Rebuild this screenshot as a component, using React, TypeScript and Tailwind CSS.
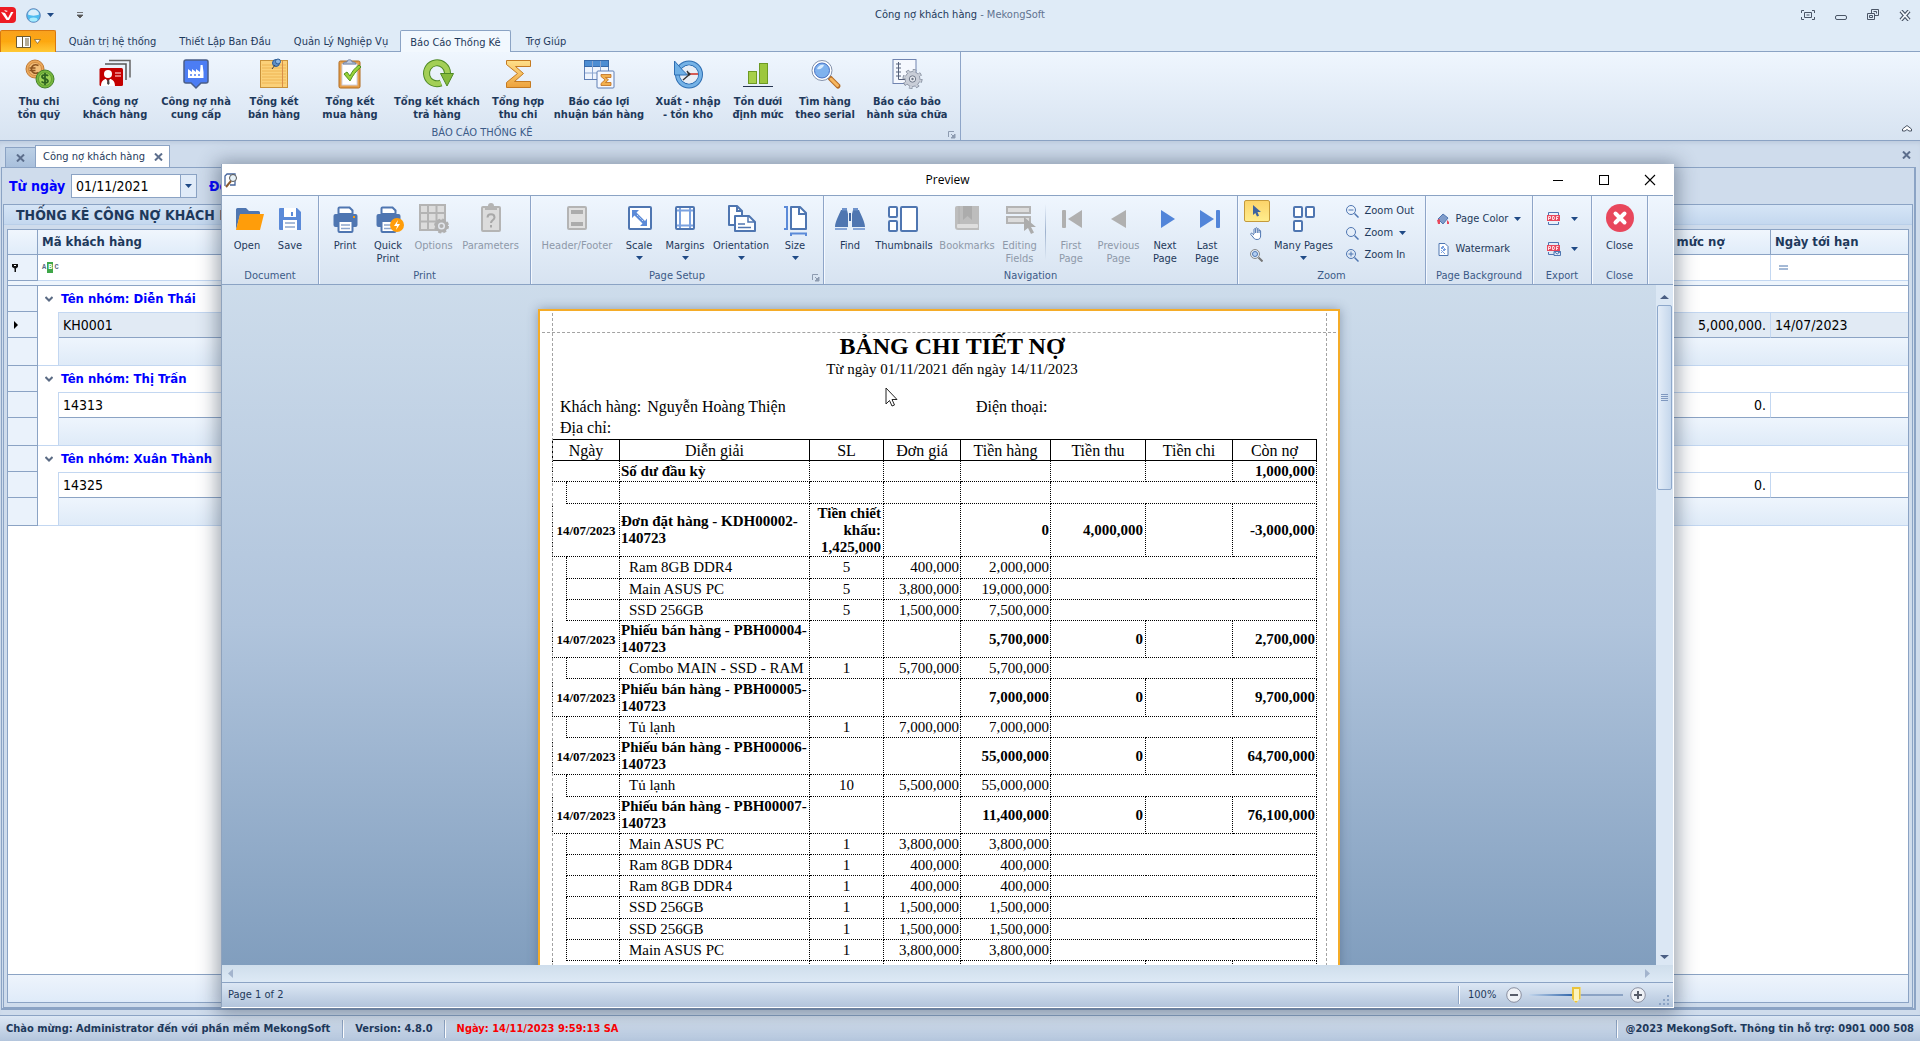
import React, { useState } from 'react';
import clsx from 'clsx';

const menuTabs = [
  { label: 'Quản trị hệ thống', width: 'w-[111px]' },
  { label: 'Thiết Lập Ban Đầu', width: 'w-[114px]' },
  { label: 'Quản Lý Nghiệp Vụ', width: 'w-[118px]' },
  { label: 'Báo Cáo Thống Kê', width: 'w-[111px]' },
  { label: 'Trợ Giúp', width: 'w-[70px]' },
];

const groups = [
  { name: 'Diễn Thái', code: 'KH0001', limit: '5,000,000.', due: '14/07/2023', focused: true },
  { name: 'Thị Trấn', code: '14313', limit: '0.', due: '', focused: false },
  { name: 'Xuân Thành', code: '14325', limit: '0.', due: '', focused: false },
];

type ReportRow = {
  date?: string;
  text: string;
  sl?: string;
  price?: string;
  amount?: string;
  paid?: string;
  debt?: string;
  bold?: boolean;
  height: string;
};

const reportRows: ReportRow[] = [
  { bold: true, text: 'Số dư đầu kỳ', debt: '1,000,000', height: 'h-[21px]' },
  { text: '', height: 'h-[22px]' },
  {
    bold: true,
    date: '14/07/2023',
    text: 'Đơn đặt hàng - KDH00002-140723',
    sl: 'Tiền chiết khấu: 1,425,000',
    amount: '0',
    paid: '4,000,000',
    debt: '-3,000,000',
    height: 'h-[53px]',
  },
  { text: 'Ram 8GB DDR4', sl: '5', price: '400,000', amount: '2,000,000', height: 'h-[22px]' },
  { text: 'Main ASUS PC', sl: '5', price: '3,800,000', amount: '19,000,000', height: 'h-[21px]' },
  { text: 'SSD 256GB', sl: '5', price: '1,500,000', amount: '7,500,000', height: 'h-[21px]' },
  { bold: true, date: '14/07/2023', text: 'Phiếu bán hàng - PBH00004-140723', amount: '5,700,000', paid: '0', debt: '2,700,000', height: 'h-[37px]' },
  { text: 'Combo MAIN - SSD - RAM', sl: '1', price: '5,700,000', amount: '5,700,000', height: 'h-[21px]' },
  { bold: true, date: '14/07/2023', text: 'Phiếu bán hàng - PBH00005-140723', amount: '7,000,000', paid: '0', debt: '9,700,000', height: 'h-[38px]' },
  { text: 'Tủ lạnh', sl: '1', price: '7,000,000', amount: '7,000,000', height: 'h-[21px]' },
  { bold: true, date: '14/07/2023', text: 'Phiếu bán hàng - PBH00006-140723', amount: '55,000,000', paid: '0', debt: '64,700,000', height: 'h-[37px]' },
  { text: 'Tủ lạnh', sl: '10', price: '5,500,000', amount: '55,000,000', height: 'h-[22px]' },
  { bold: true, date: '14/07/2023', text: 'Phiếu bán hàng - PBH00007-140723', amount: '11,400,000', paid: '0', debt: '76,100,000', height: 'h-[37px]' },
  { text: 'Main ASUS PC', sl: '1', price: '3,800,000', amount: '3,800,000', height: 'h-[21px]' },
  { text: 'Ram 8GB DDR4', sl: '1', price: '400,000', amount: '400,000', height: 'h-[21px]' },
  { text: 'Ram 8GB DDR4', sl: '1', price: '400,000', amount: '400,000', height: 'h-[21px]' },
  { text: 'SSD 256GB', sl: '1', price: '1,500,000', amount: '1,500,000', height: 'h-[22px]' },
  { text: 'SSD 256GB', sl: '1', price: '1,500,000', amount: '1,500,000', height: 'h-[21px]' },
  { text: 'Main ASUS PC', sl: '1', price: '3,800,000', amount: '3,800,000', height: 'h-[21px]' },
  { bold: true, text: '', height: 'h-[37px]' },
];

function Icon({ children, size = 32 }: { children: React.ReactNode; size?: number }) {
  return (
    <svg width={size} height={size} viewBox={`0 0 ${size} ${size}`} fill="none" className="shrink-0 overflow-visible" aria-hidden="true">
      {children}
    </svg>
  );
}

function Caret({ className }: { className?: string }) {
  return (
    <svg width="7" height="4" viewBox="0 0 7 4" className={clsx('shrink-0', className)} aria-hidden="true">
      <path d="M0 0h7L3.5 4z" fill="#1f4a86" />
    </svg>
  );
}

function CloseGlyph() {
  return (
    <svg width="9" height="8" viewBox="0 0 9 8" aria-hidden="true">
      <path d="M1 .5l7 7M8 .5l-7 7" stroke="#5c6e8c" strokeWidth="2" />
    </svg>
  );
}

function Launcher() {
  return (
    <svg width="8" height="8" viewBox="0 0 8 8" fill="none" aria-hidden="true">
      <path d="M.5 6V.5H6" stroke="#8d9bb0" />
      <path d="M3 3l3 3M7 3v4H3z" stroke="#8d9bb0" fill="#8d9bb0" />
    </svg>
  );
}

const Divider = () => <div className="h-[18px] w-[2px] border-l border-[#8ea5c4] bg-white" />;

/* ---------- Main ribbon icons ---------- */

const icons = {
  coins: (
    <Icon>
      <circle cx="12" cy="12" r="9" fill="#eba85a" stroke="#c07a35" />
      <circle cx="12" cy="12" r="6.5" fill="#f3bf7b" stroke="#d18b42" />
      <path d="M15.500 8.500c-4-2-7 0-7 3.500s3 5.500 7 3.500M6.500 11h6M6.500 13.500h6" stroke="#8d5420" strokeWidth="1.6" />
      <circle cx="22" cy="22" r="9" fill="#76b63c" stroke="#43812a" />
      <circle cx="22" cy="22" r="6.500" fill="#9cd257" stroke="#5f9f35" />
      <path d="M25 19c-1-1.500-6-1.500-6 .7 0 2.500 6 1.800 6 4.400 0 2.300-5 2.300-6.500.4M22 16v12" stroke="#2e6420" strokeWidth="1.8" />
    </Icon>
  ),
  idCards: (
    <Icon>
      <path d="M10 3.500h21v17" stroke="#666" strokeWidth="1.500" />
      <path d="M6 7h21v16" stroke="#555" strokeWidth="1.500" />
      <rect x="0.500" y="11" width="23.500" height="18" rx="1.500" fill="#c40000" />
      <circle cx="9" cy="17" r="4" fill="#fff" />
      <path d="M2 29c0-5 3-7 5-7l2 3 2-3c2 0 5 2 5 7z" fill="#fff" />
      <path d="M8.500 22.500h1.500l.6 4-1.300 1.500L8 26.500z" fill="#444" />
      <path d="M16 16h6M16 19h6" stroke="#f29a9a" strokeWidth="1.300" />
    </Icon>
  ),
  factoryPin: (
    <Icon>
      <path d="M6 3h20a2 2 0 0 1 2 2v19a2 2 0 0 1-2 2h-5l-5 5-5-5H6a2 2 0 0 1-2-2V5a2 2 0 0 1 2-2z" fill="#4c7df4" stroke="#4a5e88" strokeWidth="1.500" />
      <path d="M8 21v-9l4 3v-3l4 3v-3l4 3 .6-7h2l.9 7V21z" fill="#fff" />
      <path d="M10 18h2M14 18h2M18 18h2" stroke="#4c7df4" strokeWidth="1.500" />
    </Icon>
  ),
  pinnedNote: (
    <Icon>
      <rect x="2.500" y="3.500" width="27" height="27" fill="#fbd179" stroke="#c8923a" />
      <path d="M4 8h24M4 11h24M4 14h24M4 17h24M4 20h24M4 23h24M4 26h24" stroke="#eeb554" />
      <path d="M24.500 4v26" stroke="#d98f4a" />
      <circle cx="18" cy="6" r="3.500" fill="#5f90c6" stroke="#2d5c94" />
      <circle cx="20" cy="4.500" r="2.500" fill="#8db7e2" stroke="#2d5c94" />
      <path d="M17 8l-3 4" stroke="#444" />
    </Icon>
  ),
  clipboardCheck: (
    <Icon>
      <rect x="5" y="4" width="21" height="27" rx="1.500" fill="#e6a04c" stroke="#b06a1f" />
      <rect x="8" y="7" width="15" height="21" fill="#fff" stroke="#d3d3e2" />
      <path d="M9 7c0-2 3-2 4-2 0-3 5-3 5 0 1 0 4 0 4 2z" fill="#bcc7dc" stroke="#6f80a3" />
      <path d="M10 17l3-2 3 4c2-5 5-8 9-11l2 2c-5 4-8 8-11 14z" fill="#9ad23a" stroke="#4e9320" />
    </Icon>
  ),
  refresh: (
    <Icon>
      <path d="M20 26A10.500 10.500 0 1 1 26.500 16" stroke="#4f8a26" strokeWidth="7" />
      <path d="M20 26A10.500 10.500 0 1 1 26.500 16" stroke="#a3cf56" strokeWidth="5" />
      <path d="M19.500 16.500h13L26 29z" fill="#85ba3d" stroke="#4f8a26" />
    </Icon>
  ),
  sigma: (
    <Icon>
      <path d="M4.500 3.500h24v6h-15l8 7-9 8h16v6h-24v-5l11-9-11-9z" fill="url(#gold)" stroke="#c47a22" />
      <defs>
        <linearGradient id="gold" x1="0" y1="0" x2="0" y2="1">
          <stop stopColor="#ffe08a" />
          <stop offset="1" stopColor="#eda23c" />
        </linearGradient>
      </defs>
    </Icon>
  ),
  tableSum: (
    <Icon>
      <rect x="1.500" y="3.500" width="24" height="19" fill="#eef4fd" stroke="#5f7fb5" />
      <rect x="1.500" y="3.500" width="24" height="6" fill="#4c8dd3" stroke="#3669aa" />
      <path d="M9.500 4v18M17.500 4v18M2 16h23" stroke="#8ba6d0" />
      <rect x="14" y="14" width="17" height="17" rx="1" fill="#f4f8ff" stroke="#5f7fb5" />
      <path d="M18 17.500h10v3h-5.500l3 2.300-3 2.700H28v3H18v-2l4-3.700-4-3.300z" fill="#f3b04d" stroke="#bd6d1e" strokeWidth=".8" />
    </Icon>
  ),
  history: (
    <Icon>
      <circle cx="17" cy="17.500" r="11.500" stroke="#2f6fb3" strokeWidth="5" />
      <circle cx="17" cy="17.500" r="11.500" stroke="#75b2e6" strokeWidth="3" />
      <circle cx="17" cy="17.500" r="9" fill="#e8eef6" />
      <path d="M2.500 4v14h13l-5-5z" fill="#6fb0e6" stroke="#2f6fb3" />
      <path d="M17 17h9" stroke="#d02b20" strokeWidth="1.500" />
      <path d="M18 17l-7 6M17 17l-2-3" stroke="#333" strokeWidth="1.400" />
      <circle cx="17" cy="17" r="1.500" fill="#333" />
    </Icon>
  ),
  bars: (
    <Icon>
      <rect x="6.500" y="14.500" width="8" height="12" fill="#a7d04a" stroke="#6d9a24" />
      <rect x="17.500" y="6.500" width="8" height="20" fill="#9cc73d" stroke="#6d9a24" />
      <path d="M1 29.500h30" stroke="#26344f" />
    </Icon>
  ),
  magnifier: (
    <Icon>
      <path d="M21 21l8 8" stroke="#b36a24" strokeWidth="5" strokeLinecap="round" />
      <path d="M22 22l6.500 6.500" stroke="#f7b75f" strokeWidth="3" strokeLinecap="round" />
      <circle cx="13" cy="13.500" r="10" fill="#fff" stroke="#8391ab" />
      <circle cx="13" cy="13.500" r="7.500" fill="#7fb2ee" stroke="#4670c4" />
      <path d="M8 12c1-3 4-5 7-4-1 3-4 5-7 4z" fill="#d8ebff" />
    </Icon>
  ),
  notebookGear: (
    <Icon>
      <rect x="2" y="2.500" width="23" height="24" fill="#f5f8fe" stroke="#7084b0" />
      <path d="M7.500 5v17.500h7M5 7h5M5 11h5M5 15h5M5 19h5" stroke="#55607a" />
      <circle cx="21.500" cy="22" r="8.500" stroke="#7d8798" strokeWidth="3" strokeDasharray="3.300 3.380" />
      <circle cx="21.500" cy="22" r="7.500" fill="#c9ced8" stroke="#7d8798" strokeWidth=".8" />
      <circle cx="21.500" cy="22" r="8" stroke="#c9ced8" strokeWidth="2.500" strokeDasharray="2.300 3.980" strokeDashoffset="-.5" />
      <circle cx="21.500" cy="22" r="3.200" fill="#e8ebf1" stroke="#6f7888" />
      <circle cx="21.500" cy="22" r="1.200" fill="#6f7888" />
    </Icon>
  ),
};

const reportTools = [
  { lines: ['Thu chi', 'tồn quỹ'], icon: icons.coins, width: 'w-[62px]' },
  { lines: ['Công nợ', 'khách hàng'], icon: icons.idCards, width: 'w-[90px]' },
  { lines: ['Công nợ nhà', 'cung cấp'], icon: icons.factoryPin, width: 'w-[72px]' },
  { lines: ['Tổng kết', 'bán hàng'], icon: icons.pinnedNote, width: 'w-[84px]' },
  { lines: ['Tổng kết', 'mua hàng'], icon: icons.clipboardCheck, width: 'w-[68px]' },
  { lines: ['Tổng kết khách', 'trả hàng'], icon: icons.refresh, width: 'w-[106px]' },
  { lines: ['Tổng hợp', 'thu chi'], icon: icons.sigma, width: 'w-[56px]' },
  { lines: ['Báo cáo lợi', 'nhuận bán hàng'], icon: icons.tableSum, width: 'w-[106px]' },
  { lines: ['Xuất - nhập', '- tồn kho'], icon: icons.history, width: 'w-[72px]' },
  { lines: ['Tồn dưới', 'định mức'], icon: icons.bars, width: 'w-[68px]' },
  { lines: ['Tìm hàng', 'theo serial'], icon: icons.magnifier, width: 'w-[66px]' },
  { lines: ['Báo cáo bảo', 'hành sửa chữa'], icon: icons.notebookGear, width: 'w-[98px]' },
];

/* ---------- Preview ribbon icons ---------- */

const printerShape = (
  <>
    <rect x="4.500" y="12" width="24" height="13" rx="2" fill="#4f76b1" />
    <path d="M9.500 12V6.500a1 1 0 0 1 1-1h10l3 3V12z" fill="#fff" stroke="#4f76b1" strokeWidth="2" />
    <rect x="9.500" y="19" width="14" height="11" rx="1" fill="#fff" stroke="#4f76b1" strokeWidth="2" />
    <path d="M12 23h9M12 26.500h9" stroke="#8da6cd" strokeWidth="1.500" />
  </>
);

const previewIcons = {
  open: (
    <Icon>
      <path d="M5 28V7.500A1.500 1.500 0 0 1 6.500 6H15l3 3h9.500A1.500 1.500 0 0 1 29 10.500V13H9z" fill="#4f76b1" />
      <path d="M9 12h24l-4 16H5z" fill="#ff9d0a" />
    </Icon>
  ),
  save: (
    <Icon>
      <path d="M6 6h17l4 4v18H6a1 1 0 0 1-1-1V7a1 1 0 0 1 1-1z" fill="#5b8ad8" />
      <rect x="10" y="6" width="12" height="9" fill="#fff" />
      <rect x="17" y="10" width="2" height="4" fill="#5b8ad8" />
      <rect x="9" y="18" width="14" height="10" fill="#fff" />
      <path d="M11 21h10M11 25h10" stroke="#8da6cd" strokeWidth="1.500" />
    </Icon>
  ),
  print: (
    <Icon>
      {printerShape}
      <rect x="24" y="14" width="2" height="2" fill="#ff9d0a" />
    </Icon>
  ),
  quickPrint: (
    <Icon>
      {printerShape}
      <circle cx="25" cy="23" r="7" fill="#ff9d0a" />
      <path d="M26 18l-4 6h3l-1 4 4-6h-3z" fill="#fff" />
    </Icon>
  ),
  options: (
    <Icon>
      <rect x="2" y="3" width="25" height="25" fill="#dcdcdc" stroke="#b4b4b4" strokeWidth="2" />
      <path d="M10 3v25M18.500 3v25M2 11h25M2 19.500h25" stroke="#b4b4b4" strokeWidth="2" />
      <circle cx="23.500" cy="24" r="6.500" fill="#b0b0b0" stroke="#b0b0b0" strokeWidth="2" strokeDasharray="3 2.100" />
      <circle cx="23.500" cy="24" r="2.800" fill="#b0b0b0" stroke="#e2e6ec" strokeWidth="1.500" />
    </Icon>
  ),
  parameters: (
    <Icon>
      <rect x="7" y="5" width="18" height="24" rx="1" fill="#dcdcdc" stroke="#b4b4b4" strokeWidth="2" />
      <path d="M10 4h3a3 3 0 0 1 6 0h3v4H10z" fill="#b4b4b4" />
      <path d="M12.500 15.500c0-4.500 7-4.500 7 0 0 2.500-3.500 2.500-3.500 5.500M16 23v2.500" stroke="#a8a8a8" strokeWidth="2" />
    </Icon>
  ),
  headerFooter: (
    <Icon>
      <rect x="7" y="5" width="18" height="22" rx="1" fill="#e0e0e0" stroke="#b4b4b4" strokeWidth="2" />
      <rect x="10" y="8" width="12" height="4" fill="#acacac" />
      <rect x="10" y="20" width="12" height="4" fill="#acacac" />
    </Icon>
  ),
  scale: (
    <Icon>
      <rect x="6" y="5" width="22" height="22" rx="1" fill="#fff" stroke="#4f76b1" strokeWidth="2" />
      <path d="M9 8h7l-2.500 2.500L22 19l2-2.500V24h-7l2.500-2.500-8-8L9 16z" fill="#5b8ad8" />
      <path d="M14 13l6 6" stroke="#fff" strokeDasharray="1 1.500" />
    </Icon>
  ),
  margins: (
    <Icon>
      <rect x="7" y="5" width="18" height="22" rx="1" fill="#fff" />
      <path d="M11 5v22M21 5v22M7 8.500h18M7 23.500h18" stroke="#7ba2e0" strokeWidth="2" />
      <rect x="7" y="5" width="18" height="22" rx="1" stroke="#4f76b1" strokeWidth="2" />
    </Icon>
  ),
  orientation: (
    <Icon>
      <path d="M4 4h8l5 5v14H4z" fill="#fff" stroke="#4f76b1" strokeWidth="2" strokeLinejoin="round" />
      <path d="M12 4v5h5" stroke="#4f76b1" strokeWidth="2" />
      <path d="M10 14h14l6 6v9H10z" fill="#fff" stroke="#4f76b1" strokeWidth="2" strokeLinejoin="round" />
      <path d="M23 14v6h7M13 22h7M13 25.500h13" stroke="#4f76b1" strokeWidth="1.500" />
    </Icon>
  ),
  size: (
    <Icon>
      <path d="M12 5h9l6 6v16H12z" fill="#fff" stroke="#4f76b1" strokeWidth="2" strokeLinejoin="round" />
      <path d="M20 5v7h7" stroke="#4f76b1" strokeWidth="2" />
      <path d="M5 5h3v22H5M12 34v-2.500h15V34" stroke="#5b8ad8" strokeWidth="2" />
    </Icon>
  ),
  find: (
    <Icon>
      <path d="M1 25c0-5 4-12 6-17h6l1 4v13H1zM31 25c0-5-4-12-6-17h-6l-1 4v13h13z" fill="#4f76b1" />
      <path d="M8 6h5v2.500H8zM19 6h5v2.500h-5z" fill="#6f93cc" />
      <path d="M1 26h12v2H1zM19 26h12v2H19z" fill="#86a6d8" />
      <path d="M16 11v8" stroke="#3f649f" strokeWidth="2" />
    </Icon>
  ),
  thumbnails: (
    <Icon>
      <g fill="#fff" stroke="#4f76b1" strokeWidth="2">
        <rect x="1" y="5" width="8" height="10" rx="1" />
        <rect x="1" y="19" width="8" height="10" rx="1" />
        <rect x="13" y="5" width="16" height="24" rx="1" />
      </g>
    </Icon>
  ),
  bookmarks: (
    <Icon>
      <path d="M6 4h22v24H7a3 3 0 0 1-3-3V6a2 2 0 0 1 2-2z" fill="#bdbdbd" />
      <path d="M8 4v18" stroke="#b0b0b0" />
      <path d="M12 4h9v14l-4.500-4-4.500 4z" fill="#acacac" />
      <rect x="6" y="22" width="21" height="4" rx="1" fill="#dedede" />
    </Icon>
  ),
  editing: (
    <Icon>
      <rect x="3" y="5" width="23" height="6" fill="#dcdcdc" stroke="#b4b4b4" strokeWidth="2" />
      <rect x="3" y="15" width="23" height="6" fill="#dcdcdc" stroke="#b4b4b4" strokeWidth="2" />
      <path d="M20 15v14l4-3 3 6 3-1.500-3-5.500h5z" fill="#acacac" />
    </Icon>
  ),
  first: (
    <Icon>
      <rect x="7" y="8" width="4" height="18" rx="1" fill="#b0b0b0" />
      <path d="M27 8v18L13 17z" fill="#b0b0b0" />
    </Icon>
  ),
  previous: (
    <Icon>
      <path d="M23 8v18L8 17z" fill="#b0b0b0" />
    </Icon>
  ),
  next: (
    <Icon>
      <path d="M12 8v18l14-9z" fill="#5285d9" />
    </Icon>
  ),
  last: (
    <Icon>
      <rect x="25" y="8" width="4" height="18" rx="1" fill="#5285d9" />
      <path d="M9 8v18l14-9z" fill="#5285d9" />
    </Icon>
  ),
  manyPages: (
    <Icon>
      <g fill="#fff" stroke="#4f76b1" strokeWidth="2">
        <rect x="6" y="5" width="8" height="10" rx="1" />
        <rect x="18" y="5" width="8" height="10" rx="1" />
        <rect x="6" y="19" width="8" height="10" rx="1" />
      </g>
    </Icon>
  ),
  close: (
    <Icon>
      <circle cx="16" cy="16" r="14" fill="#e8475c" />
      <path d="M11.500 11.500l9 9M20.500 11.500l-9 9" stroke="#fff" strokeWidth="4" strokeLinecap="round" />
    </Icon>
  ),
};

function ZoomGlyph({ sign }: { sign?: 'plus' | 'minus' }) {
  return (
    <svg width="13" height="13" viewBox="0 0 13 13" fill="none" stroke="#4f76b1" aria-hidden="true">
      <circle cx="5" cy="5" r="4.500" />
      <path d="M8.500 8.500l4 4" strokeWidth="1.500" />
      {sign && <path d="M2.500 5h5" />}
      {sign === 'plus' && <path d="M5 2.500v5" />}
    </svg>
  );
}

function PdfGlyph({ mail }: { mail?: boolean }) {
  return (
    <svg width="14" height="14" viewBox="0 0 14 14" fill="none" aria-hidden="true">
      <path d="M1.500 3V.5h10V3M1.500 10v2.500h10V10" stroke="#4f76b1" />
      <rect x="0" y="3" width="13" height="6" fill="#e8475c" />
      <path d="M1.500 8V4.500h2v2h-2M5.500 4.500v3h1.500l.5-1.500-.5-1.500zM9.500 8V4.500h2M9.500 6.500h1.500" stroke="#fff" strokeWidth=".8" />
      {mail && <path d="M7 9.500h6.500v4H7zM7 9.500l3.200 2.500 3.300-2.500" fill="#dbe7f8" stroke="#4f76b1" />}
    </svg>
  );
}

type PreviewButtonProps = {
  icon: React.ReactNode;
  lines: string[];
  width: string;
  disabled?: boolean;
  dropdown?: boolean;
};

function PreviewButton({ icon, lines, width, disabled, dropdown }: PreviewButtonProps) {
  return (
    <button disabled={disabled} className={clsx('flex shrink-0 flex-col items-center whitespace-nowrap pt-1.5', width, disabled && 'text-[#8e99a9]')}>
      {icon}
      <span className="mt-[5px] leading-[13px]">
        {lines.map((line) => (
          <span key={line} className="block">{line}</span>
        ))}
      </span>
      {dropdown && <Caret className="mt-1" />}
    </button>
  );
}

type PreviewGroupProps = {
  caption: string;
  width: string;
  children: React.ReactNode;
  launcher?: boolean;
  className?: string;
};

function PreviewGroup({ caption, width, children, launcher, className }: PreviewGroupProps) {
  return (
    <section className={clsx('flex shrink-0 flex-col border-r border-[#8ea5c8] shadow-[1px_0_0_#f5f9ff]', width)}>
      <div className={clsx('flex flex-1 justify-center', className)}>{children}</div>
      <div className="relative h-4 text-center leading-4 text-[#3b5a87]">
        {caption}
        {launcher && (
          <button className="absolute right-[3px] bottom-0.5" aria-label="Page setup options">
            <Launcher />
          </button>
        )}
      </div>
    </section>
  );
}

function PreviewRibbon() {
  const p = previewIcons;
  return (
    <div className="flex h-[89px] shrink-0 border-b border-[#8ba3c4] bg-gradient-to-b from-[#eff6fe] to-[#d7e3f1]">
      <PreviewGroup caption="Document" width="w-[97px]" className="pr-1">
        <PreviewButton icon={p.open} lines={['Open']} width="w-[44px]" />
        <PreviewButton icon={p.save} lines={['Save']} width="w-[42px]" />
      </PreviewGroup>
      <PreviewGroup caption="Print" width="w-[212px]">
        <PreviewButton icon={p.print} lines={['Print']} width="w-[41px]" />
        <PreviewButton icon={p.quickPrint} lines={['Quick', 'Print']} width="w-[45px]" />
        <PreviewButton icon={p.options} lines={['Options']} width="w-[46px]" disabled />
        <PreviewButton icon={p.parameters} lines={['Parameters']} width="w-[68px]" disabled />
      </PreviewGroup>
      <PreviewGroup caption="Page Setup" width="w-[293px]" launcher>
        <PreviewButton icon={p.headerFooter} lines={['Header/Footer']} width="w-[80px]" disabled />
        <PreviewButton icon={p.scale} lines={['Scale']} width="w-[44px]" dropdown />
        <PreviewButton icon={p.margins} lines={['Margins']} width="w-[48px]" dropdown />
        <PreviewButton icon={p.orientation} lines={['Orientation']} width="w-[64px]" dropdown />
        <PreviewButton icon={p.size} lines={['Size']} width="w-[44px]" dropdown />
      </PreviewGroup>
      <PreviewGroup caption="Navigation" width="w-[414px]" className="pr-1">
        <PreviewButton icon={p.find} lines={['Find']} width="w-[42px]" />
        <PreviewButton icon={p.thumbnails} lines={['Thumbnails']} width="w-[66px]" />
        <PreviewButton icon={p.bookmarks} lines={['Bookmarks']} width="w-[60px]" disabled />
        <PreviewButton icon={p.editing} lines={['Editing', 'Fields']} width="w-[45px]" disabled />
        <div className="mx-[3px] my-2 w-px bg-gradient-to-b from-transparent via-[#9db1cd] to-transparent" />
        <PreviewButton icon={p.first} lines={['First', 'Page']} width="w-[44px]" disabled />
        <PreviewButton icon={p.previous} lines={['Previous', 'Page']} width="w-[51px]" disabled />
        <PreviewButton icon={p.next} lines={['Next', 'Page']} width="w-[42px]" />
        <PreviewButton icon={p.last} lines={['Last', 'Page']} width="w-[42px]" />
      </PreviewGroup>
      <PreviewGroup caption="Zoom" width="w-[188px]">
        <div className="flex flex-col items-center pt-1">
          <button aria-label="Pointer" className="flex h-[22px] w-[26px] items-center justify-center rounded-xs border border-[#c49a3c] bg-gradient-to-b from-[#fbd46a] to-[#ffec8c]">
            <svg width="8" height="12" viewBox="0 0 8 12" aria-hidden="true">
              <path d="M0 0v10l2.300-2L4 11.500l2-.8L4.500 7H8z" fill="#3f649f" />
            </svg>
          </button>
          <button aria-label="Hand tool" className="flex h-[22px] w-[26px] items-center justify-center">
            <svg width="13" height="13" viewBox="0 0 13 13" aria-hidden="true">
              <path d="M4 7V2.500c0-1 1.600-1 1.600 0V1.500c0-1 1.700-1 1.700 0v1c0-1 1.700-1 1.700 0v1.500c0-1 1.600-1 1.600 0V9c0 2-1 3.500-3.500 3.500S4 11.500 3 10L.8 7.500C.2 6.500 1.500 5.800 2.200 6.500L4 8M5.600 2.500V6M7.300 2.500V6M9 3.500V6" fill="#fff" stroke="#4f76b1" />
            </svg>
          </button>
          <button aria-label="Magnifier" className="flex h-[22px] w-[26px] items-center justify-center">
            <svg width="13" height="13" viewBox="0 0 13 13" fill="none" aria-hidden="true">
              <circle cx="5" cy="5" r="4.500" stroke="#8a8a8a" />
              <circle cx="5" cy="5" r="2.500" fill="#b4d0f3" stroke="#4f76b1" />
              <path d="M8.500 8.500l4 4" stroke="#777" strokeWidth="2" />
            </svg>
          </button>
        </div>
        <PreviewButton icon={p.manyPages} lines={['Many Pages']} width="w-[68px]" dropdown />
        <div className="ml-2 flex w-[74px] flex-col pt-1">
          <button className="flex h-[22px] items-center gap-1.5 whitespace-nowrap"><ZoomGlyph sign="minus" />Zoom Out</button>
          <button className="flex h-[22px] items-center gap-1.5 whitespace-nowrap"><ZoomGlyph />Zoom<Caret /></button>
          <button className="flex h-[22px] items-center gap-1.5 whitespace-nowrap"><ZoomGlyph sign="plus" />Zoom In</button>
        </div>
      </PreviewGroup>
      <PreviewGroup caption="Page Background" width="w-[107px]">
        <div className="flex flex-col pt-2">
          <button className="flex h-[30px] items-center gap-1.5 whitespace-nowrap">
            <svg width="13" height="12" viewBox="0 0 13 12" aria-hidden="true">
              <path d="M1 6l5-5 5 4-5 6z" fill="#7f9cca" stroke="#4f76b1" />
              <path d="M0 7l3-1v5H1zM10 7l2 2v2h-2z" fill="#e8475c" />
            </svg>
            Page Color
            <Caret />
          </button>
          <button className="flex h-[30px] items-center gap-1.5 whitespace-nowrap">
            <svg width="13" height="13" viewBox="0 0 13 13" aria-hidden="true">
              <path d="M2 .5h6l3 3v9H2z" fill="#fff" stroke="#4f76b1" />
              <path d="M4 4l4 4M4 7l4 4M5 3l4 4M4 10l4-4M4 6l3-3" stroke="#7ba2e0" />
            </svg>
            Watermark
          </button>
        </div>
      </PreviewGroup>
      <PreviewGroup caption="Export" width="w-[59px]">
        <div className="flex flex-col pt-2">
          <button aria-label="Export to PDF" className="flex h-[30px] items-center gap-2.5"><PdfGlyph /><Caret /></button>
          <button aria-label="E-mail as PDF" className="flex h-[30px] items-center gap-2.5"><PdfGlyph mail /><Caret /></button>
        </div>
      </PreviewGroup>
      <PreviewGroup caption="Close" width="w-[56px]">
        <PreviewButton icon={p.close} lines={['Close']} width="w-[44px]" />
      </PreviewGroup>
    </div>
  );
}

function ReportTable() {
  const dot = 'border-dotted border-black';
  return (
    <table className="w-full table-fixed border-collapse text-[15px] leading-[17px]">
      <colgroup>
        <col className="w-[14px]" />
        <col className="w-[53px]" />
        <col className="w-[190px]" />
        <col className="w-[74px]" />
        <col className="w-[77px]" />
        <col className="w-[90px]" />
        <col className="w-[95px]" />
        <col className="w-[87px]" />
        <col className="w-[84px]" />
      </colgroup>
      <thead>
        <tr className="h-[21px] text-[16px] [&>th]:border [&>th]:border-black [&>th]:p-0 [&>th]:font-normal">
          <th colSpan={2}>Ngày</th>
          <th>Diễn giải</th>
          <th>SL</th>
          <th>Đơn giá</th>
          <th>Tiền hàng</th>
          <th>Tiền thu</th>
          <th>Tiền chi</th>
          <th>Còn nợ</th>
        </tr>
      </thead>
      <tbody>
        {reportRows.map((row, i) =>
          row.bold ? (
            <tr key={i} className={clsx('font-bold', row.height)}>
              <td colSpan={2} className={clsx('border-x border-b p-0 text-center text-[13px]', dot)}>{row.date}</td>
              <td className={clsx('border-x border-b p-0 pl-px', dot)}>{row.text}</td>
              <td className={clsx('border-x border-b p-0 pr-0.5 text-right', dot)}>{row.sl}</td>
              <td className={clsx('border-x border-b p-0', dot)}></td>
              <td className={clsx('border-x border-b p-0 pr-px text-right', dot)}>{row.amount}</td>
              <td className={clsx('border-x border-b p-0 pr-0.5 text-right', dot)}>{row.paid}</td>
              <td className={clsx('border-x border-b p-0', dot)}></td>
              <td className={clsx('border-x border-b p-0 pr-px text-right', dot)}>{row.debt}</td>
            </tr>
          ) : (
            <tr key={i} className={row.height}>
              <td className="p-0"></td>
              <td className={clsx('border-x border-b p-0', dot)}></td>
              <td className={clsx('whitespace-nowrap border-x border-b p-0 pl-[9px]', dot)}>{row.text}</td>
              <td className={clsx('border-x border-b p-0 text-center', dot)}>{row.sl}</td>
              <td className={clsx('border-x border-b p-0 pr-px text-right', dot)}>{row.price}</td>
              <td className={clsx('border-x border-b p-0 pr-px text-right', dot)}>{row.amount}</td>
              <td colSpan={3} className={clsx('border-x border-b p-0', dot)}></td>
            </tr>
          ),
        )}
      </tbody>
    </table>
  );
}

function ReportPage() {
  return (
    <div className="relative mx-auto mt-6 w-[802px] border-2 border-b-0 border-[#f5ac28] bg-white pr-[22px] pl-[12px] font-['Liberation_Serif',serif] text-black shadow-[0_0_10px_rgba(60,80,110,0.45)]">
      {/* Page margins */}
      <div className="pointer-events-none absolute inset-y-[2px] left-[12px] border-l border-dashed border-[#a3a3a3]" />
      <div className="pointer-events-none absolute inset-y-[2px] right-[11px] border-l border-dashed border-[#a3a3a3]" />
      <div className="pointer-events-none absolute inset-x-[2px] top-[21px] border-t border-dashed border-[#a3a3a3]" />
      <div className="pt-[21px] pl-9 text-center">
        <h1 className="text-[24px] leading-[28px] font-bold">BẢNG CHI TIẾT NỢ</h1>
        <p className="text-[15px] leading-[19px]">Từ ngày 01/11/2021 đến ngày 14/11/2023</p>
      </div>
      <div className="mt-[17px] mb-px grid grid-cols-[416px_1fr] pl-2 text-[16px] leading-[21px]">
        <p><span className="mr-1.5">Khách hàng:</span>Nguyễn Hoàng Thiện</p>
        <p>Điện thoại:</p>
        <p>Địa chỉ:</p>
      </div>
      <ReportTable />
      <svg width="13" height="20" viewBox="0 0 13 20" className="absolute top-[76px] left-[345px]" aria-hidden="true">
        <path d="M1 1v16l3.500-3.500L7 19l2.500-1-2.500-5.500h5z" fill="#fff" stroke="#222" />
      </svg>
    </div>
  );
}

function PreviewWindow() {
  const [zoom, setZoom] = useState(50);
  return (
    <div role="dialog" aria-label="Preview" className="absolute top-[164px] right-[246px] bottom-[33px] left-[221px] flex flex-col border-x border-b border-l-[#8fa3bd] border-r-white border-b-white bg-[#cfdcec] shadow-[0_2px_18px_4px_rgba(40,55,80,0.45)]">
      <div className="relative flex h-8 shrink-0 items-center border-b border-[#8ba3c4] bg-white pr-4">
        <svg width="14" height="16" viewBox="0 0 14 16" fill="none" className="ml-0.5" aria-hidden="true">
          <path d="M1 14V4l2-2h8v11H6" stroke="#44649c" strokeWidth="1.300" />
          <circle cx="9" cy="6" r="3.500" fill="#e7f2f8" stroke="#555" />
          <path d="M7 9l-5 6" stroke="#8a5a30" strokeWidth="2" />
        </svg>
        <h2 className="flex-1 text-center font-['Open_Sans',sans-serif] text-[12px] text-black">Preview</h2>
        <div className="absolute inset-y-0 right-0 flex">
          {['Minimize', 'Maximize', 'Close'].map((name) => (
            <button key={name} aria-label={name} className="flex w-[46px] items-center justify-center">
              <svg width="12" height="12" viewBox="0 0 12 12" fill="none" stroke="#000" aria-hidden="true">
                {name === 'Minimize' && <path d="M1 6.500h10" />}
                {name === 'Maximize' && <rect x="1.500" y="1.500" width="9" height="9" />}
                {name === 'Close' && <path d="M1 1l10 10M11 1L1 11" strokeWidth="1.100" />}
              </svg>
            </button>
          ))}
        </div>
      </div>
      <PreviewRibbon />
      <div className="flex min-h-0 flex-1">
        <div className="flex-1 overflow-hidden bg-gradient-to-b from-[#cddceb] via-[#b0c4dc] to-[#819ebe]">
          <ReportPage />
        </div>
        <div className="flex w-[17px] flex-col items-center bg-[#dbe7f4]">
          <svg width="9" height="17" viewBox="0 0 9 17" aria-hidden="true"><path d="M0 14h9L4.500 10z" fill="#4b5f84" /></svg>
          <div className="mt-[3px] flex h-[185px] w-[15px] flex-col items-center justify-center gap-px rounded-xs border border-[#8ea8cb] bg-gradient-to-r from-[#e4edf8] to-[#c5d7ec]">
            <i className="h-px w-[7px] bg-[#7f98bf]" />
            <i className="h-px w-[7px] bg-[#7f98bf]" />
            <i className="h-px w-[7px] bg-[#7f98bf]" />
            <i className="h-px w-[7px] bg-[#7f98bf]" />
          </div>
          <svg width="9" height="17" viewBox="0 0 9 17" className="mt-auto" aria-hidden="true"><path d="M0 7h9l-4.500 4z" fill="#4b5f84" /></svg>
        </div>
      </div>
      <div className="flex h-[17px] shrink-0 items-center justify-between bg-gradient-to-b from-[#cfdeec] to-[#dde9f5] pr-[23px] pl-[6px]">
        <svg width="5" height="9" viewBox="0 0 5 9" aria-hidden="true"><path d="M5 0v9L0 4.500z" fill="#a3b4cd" /></svg>
        <svg width="5" height="9" viewBox="0 0 5 9" aria-hidden="true"><path d="M0 0v9l5-4.500z" fill="#a3b4cd" /></svg>
      </div>
      <div className="flex h-[25px] shrink-0 items-center border-t border-[#8ba3c4] bg-gradient-to-b from-[#dce7f4] to-[#b3c5dc] pr-1 pl-1.5">
        <span>Page 1 of 2</span>
        <div className="ml-auto flex items-center">
          <Divider />
          <span className="mx-2 w-[29px]">100%</span>
          <button aria-label="Zoom out" className="ml-[1px]">
            <svg width="16" height="16" viewBox="0 0 16 16" aria-hidden="true">
              <circle cx="8" cy="8" r="7.300" fill="#eef1f6" stroke="#8a8fa0" />
              <path d="M4 8h8" stroke="#585d6a" strokeWidth="2" />
            </svg>
          </button>
          <input
            type="range"
            aria-label="Zoom"
            value={zoom}
            onChange={(e) => setZoom(Number(e.target.value))}
            className="mx-[7px] h-4 w-[94px] appearance-none bg-[linear-gradient(to_right,#c3d6ec,#2d63a8_48%,#8ba3c4_50%)] bg-[length:100%_2px] bg-center bg-no-repeat [&::-webkit-slider-thumb]:h-4 [&::-webkit-slider-thumb]:w-[9px] [&::-webkit-slider-thumb]:appearance-none [&::-webkit-slider-thumb]:border-2 [&::-webkit-slider-thumb]:border-[#eac33c] [&::-webkit-slider-thumb]:bg-[#fdf3b8] [&::-webkit-slider-thumb]:[clip-path:polygon(0_0,100%_0,100%_70%,50%_100%,0_70%)]"
          />
          <button aria-label="Zoom in">
            <svg width="16" height="16" viewBox="0 0 16 16" aria-hidden="true">
              <circle cx="8" cy="8" r="7.300" fill="#eef1f6" stroke="#8a8fa0" />
              <path d="M4 8h8M8 4v8" stroke="#585d6a" strokeWidth="2" />
            </svg>
          </button>
          <svg width="11" height="11" viewBox="0 0 11 11" className="mt-2 ml-3" fill="#8ba3c4" aria-hidden="true">
            <path d="M9 1h2v2H9zM9 5h2v2H9zM5 5h2v2H5zM9 9h2v2H9zM5 9h2v2H5zM1 9h2v2H1z" />
          </svg>
        </div>
      </div>
    </div>
  );
}

function TitleBar() {
  return (
    <header className="relative flex h-[30px] shrink-0 items-center">
      <svg width="16" height="16" viewBox="0 0 16 16" aria-hidden="true">
        <path d="M0 0h12a4 4 0 0 1 4 4v8a4 4 0 0 1-4 4H0z" fill="#ed1c24" />
        <path d="M1 5l4 1 3 5 3-6h2.500L9 13H6.500zM4 3l4 1-2 1z" fill="#fff" />
      </svg>
      <button className="ml-2.5 flex items-center gap-1.5" aria-label="Skins">
        <svg width="15" height="15" viewBox="0 0 15 15" aria-hidden="true">
          <circle cx="7.500" cy="7.500" r="6.800" fill="#4fbcf0" stroke="#5d83b8" />
          <path d="M2 6.500a5.500 5 0 0 1 11 0c-3 1.500-8 1.500-11 0z" fill="#dbeefb" />
          <ellipse cx="7.500" cy="11.500" rx="4" ry="2" fill="#a8ecfd" />
        </svg>
        <Caret />
      </button>
      <button className="ml-[23px]" aria-label="Customize toolbar">
        <svg width="6" height="6" viewBox="0 0 6 6" aria-hidden="true"><path d="M0 .5h6M0 3h6L3 6z" stroke="#555" strokeWidth=".8" fill="#555" /></svg>
      </button>
      <h1 className="absolute inset-x-0 text-center font-normal">
        Công nợ khách hàng <span className="text-[#5f7391]">- MekongSoft</span>
      </h1>
      <div className="absolute right-[9px] flex items-center gap-5">
        <button aria-label="Full screen">
          <svg width="14" height="10" viewBox="0 0 14 10" fill="none" stroke="#4a5566" aria-hidden="true">
            <path d="M.5 3V.5H3M11 .5h2.500V3M13.500 7v2.500H11M3 9.500H.5V7M3.500 2.500h7v5h-7zM5.500 5h3" />
          </svg>
        </button>
        <button aria-label="Minimize">
          <svg width="12" height="12" viewBox="0 0 12 12" fill="none" stroke="#4a5566" aria-hidden="true"><rect x=".5" y="6.500" width="11" height="4" rx="1.500" /></svg>
        </button>
        <button aria-label="Restore">
          <svg width="12" height="12" viewBox="0 0 12 12" fill="none" stroke="#4a5566" aria-hidden="true">
            <path d="M4.500 4V.5h7v6H8M.5 4.500h7v6h-7zM2.500 6.500h3v2h-3zM6.500 2.500h3v2" />
          </svg>
        </button>
        <button aria-label="Close">
          <svg width="12" height="11" viewBox="0 0 12 11" fill="none" aria-hidden="true">
            <path d="M2 1l8 9M10 1l-8 9" stroke="#4a5566" strokeWidth="4" />
            <path d="M2 1l8 9M10 1l-8 9" stroke="#f2f6fb" strokeWidth="1.800" />
          </svg>
        </button>
      </div>
    </header>
  );
}

function MainRibbon() {
  return (
    <>
      <nav className="flex h-[22px] shrink-0 items-end shadow-[inset_0_-1px_0_#8ba3c4]">
        <button aria-label="Application menu" className="mr-px flex h-full w-[56px] items-center justify-center gap-[3px] rounded-t-xs border border-b-0 border-[#d8780e] bg-gradient-to-b from-[#f9a11d] via-[#fda80f] to-[#ffc935]">
          <svg width="15" height="12" viewBox="0 0 15 12" fill="#fff" stroke="#6b5a32" aria-hidden="true">
            <path d="M.5.5h14v11H.5zM6.500.5v11M9 3h4M9 5h4M9 7h4M9 9h4" />
          </svg>
          <svg width="7" height="5" viewBox="0 0 7 5" fill="#fff" stroke="#6b5a32" strokeWidth=".7" aria-hidden="true"><path d="M.5.5h6L3.500 4.500z" /></svg>
        </button>
        {menuTabs.map((tab, i) => (
          <button
            key={tab.label}
            className={clsx(
              'h-full whitespace-nowrap pt-0.5 text-center',
              tab.width,
              i === 3 && 'rounded-t-xs border border-b-0 border-[#8ba3c4] bg-[#f2f8fe]',
            )}
          >
            {tab.label}
          </button>
        ))}
      </nav>
      <div className="flex h-[89px] shrink-0 justify-between border-b border-[#8ba3c4] bg-gradient-to-b from-[#eff6fe] to-[#d7e3f1]">
        <section className="flex flex-col border-r border-[#8ea5c8] pr-1 pl-2">
          <div className="flex flex-1">
            {reportTools.map((tool) => (
              <button key={tool.lines.join(' ')} className={clsx('flex shrink-0 flex-col items-center whitespace-nowrap pt-[5px] font-bold', tool.width)}>
                {tool.icon}
                <span className="mt-1.5 leading-[13px]">
                  <span className="block">{tool.lines[0]}</span>
                  <span className="block">{tool.lines[1]}</span>
                </span>
              </button>
            ))}
          </div>
          <div className="relative h-[15px] text-center leading-[15px] text-[#3b5a87]">
            BÁO CÁO THỐNG KÊ
            <button className="absolute right-0 bottom-px" aria-label="Report options"><Launcher /></button>
          </div>
        </section>
        <button className="mr-2 mb-2 self-end" aria-label="Collapse ribbon">
          <svg width="10" height="7" viewBox="0 0 10 7" fill="#fff" stroke="#4a5566" aria-hidden="true"><path d="M.5 4L5 .5 9.500 4v2H7L5 4.500 3 6H.5z" /></svg>
        </button>
      </div>
    </>
  );
}

function DebtGrid() {
  const indicator = 'border-r border-b border-[#8ba3c4] bg-[#eaf2fb] p-0';
  const footer = 'border-b border-[#c3d7f1] bg-gradient-to-b from-[#eef5fd] to-[#dfebf8] p-0';
  return (
    <div className="mx-[3px] my-1 flex flex-1 flex-col border border-[#8ba3c4] bg-white">
      <table className="w-full table-fixed border-separate border-spacing-0 text-left text-[14px] leading-[18px] text-black">
        <colgroup>
          <col className="w-[30px]" />
          <col className="w-[21px]" />
          <col />
          <col className="w-[133px]" />
          <col className="w-[137px]" />
        </colgroup>
        <thead>
          <tr className="h-[25px] text-[13px] text-[#1e395b] [&>th]:border-b [&>th]:border-[#8ba3c4] [&>th]:bg-gradient-to-b [&>th]:from-[#f0f6fd] [&>th]:to-[#e0ecf9] [&>th]:p-0">
            <th className="border-r"></th>
            <th colSpan={2} className="border-r"><span className="pl-1">Mã khách hàng</span></th>
            <th className="border-r"><span className="pl-1">Định mức nợ</span></th>
            <th><span className="pl-1">Ngày tới hạn</span></th>
          </tr>
          <tr className="h-[26px]">
            <td className={indicator}>
              <svg width="6" height="8" viewBox="0 0 6 8" className="ml-1" aria-hidden="true"><path d="M0 0h6v3L4 4.500V8H2.500V4.500L0 3z" fill="#111" /><path d="M2 1.500h2" stroke="#fff" /></svg>
            </td>
            <td colSpan={2} className="border-r border-b border-[#c3d7f1] p-0">
              <label className="flex items-center gap-0.5 pl-1">
                <span className="flex items-center font-['Liberation_Mono',monospace] text-[7px] leading-[11px] font-bold text-[#5b6b84]">
                  A<span className="mx-px bg-[#3fa648] px-px text-white">B</span>C
                </span>
                <input aria-label="Lọc mã khách hàng" className="h-5 flex-1 bg-transparent outline-none" />
              </label>
            </td>
            <td className="border-r border-b border-[#c3d7f1] p-0"></td>
            <td className="border-b border-[#c3d7f1] p-0 pl-2">
              <svg width="9" height="5" viewBox="0 0 9 5" aria-hidden="true"><path d="M0 1h9M0 4h9" stroke="#4a74ad" /></svg>
            </td>
          </tr>
          <tr className="h-[5px]"><td colSpan={5} className="border-b border-[#8ba3c4] bg-[#eef5fc] p-0"></td></tr>
        </thead>
        {groups.map((g) => (
          <tbody key={g.name}>
            <tr className="h-[26px]">
              <td className={indicator}></td>
              <td colSpan={4} className="p-0 text-[13px] font-bold text-[#0000ff]">
                <button className="ml-[7px] flex items-center gap-2">
                  <svg width="8" height="6" viewBox="0 0 8 6" fill="none" aria-hidden="true"><path d="M.5 1L4 4.500 7.500 1" stroke="#5b6b84" strokeWidth="2" /></svg>
                  Tên nhóm: {g.name}
                </button>
              </td>
            </tr>
            <tr className="h-[26px]">
              <td className={indicator}>
                {g.focused && <svg width="4" height="8" viewBox="0 0 4 8" className="ml-1.5" aria-hidden="true"><path d="M0 0v8l4-4z" fill="#000" /></svg>}
              </td>
              <td className="border-r border-[#c3d7f1] p-0"></td>
              {[g.code, g.limit, g.due].map((value, i) => (
                <td
                  key={i}
                  className={clsx(
                    'border-t border-t-[#c3d7f1] border-r-[#c3d7f1] border-b border-b-[#8ba3c4] px-1 py-0',
                    i < 2 && 'border-r',
                    i === 1 && 'text-right',
                    g.focused && 'bg-[#e1eaf4]',
                  )}
                >
                  {value}
                </td>
              ))}
            </tr>
            <tr className="h-[28px]">
              <td className={indicator}></td>
              <td className="border-r border-b border-[#c3d7f1] p-0"></td>
              <td colSpan={3} className={footer}></td>
            </tr>
          </tbody>
        ))}
      </table>
      <div className="mt-auto h-[28px] border-t border-[#8ba3c4] bg-gradient-to-b from-[#eef4fc] to-[#dfebf9]" />
    </div>
  );
}

export default function App() {
  return (
    <div className="relative flex h-screen min-h-[700px] flex-col overflow-hidden bg-[#dfebf7] font-['DejaVu_Sans_Condensed','DejaVu_Sans',sans-serif] text-[11px] leading-[14px] text-[#1e395b]">
      <TitleBar />
      <MainRibbon />

      <main className="flex min-h-0 flex-1 flex-col bg-[#cfdcec] shadow-[inset_0_4px_4px_-2px_#bccadd]">
        <div className="flex h-[26px] shrink-0 items-end pr-[9px] pl-[5px]">
          <button aria-label="Close tab" className="flex h-5 w-[30px] items-center justify-center border border-r-0 border-b-0 border-[#8ba3c4] bg-gradient-to-b from-[#bcd0e6] to-[#a9c0dc]">
            <CloseGlyph />
          </button>
          <div className="flex h-[22px] w-[135px] items-center justify-between border border-b-0 border-[#8ba3c4] bg-white pr-1.5 pl-[7px] whitespace-nowrap">
            Công nợ khách hàng
            <button aria-label="Close Công nợ khách hàng"><CloseGlyph /></button>
          </div>
          <button className="mb-2 ml-auto" aria-label="Close page"><CloseGlyph /></button>
        </div>

        <div className="mr-[4px] ml-px flex flex-1 flex-col border border-r-2 border-b-2 border-[#8ba3c4]">
          <form className="flex h-9 shrink-0 items-center pl-[7px] text-[14px] font-bold text-[#0000ff]">
            <label htmlFor="from" className="w-[62px]">Từ ngày</label>
            <div className="flex h-6 w-[126px] border border-[#8ba3c4] bg-white font-normal text-black">
              <input id="from" defaultValue="01/11/2021" className="w-0 flex-1 pl-1 outline-none" />
              <button type="button" aria-label="Chọn ngày" className="flex w-4 items-center justify-center border-l border-[#8ba3c4] bg-[#e0ebf8]"><Caret /></button>
            </div>
            <span className="ml-3">Đến ngày</span>
          </form>
          <div className="mx-px flex flex-1 flex-col border border-[#8ba3c4]">
            <h2 className="h-5 shrink-0 border-b border-[#b9cfe9] bg-gradient-to-b from-[#d6e5f6] to-[#c4d8ef] pl-3 text-[14px] leading-[20px] font-bold">
              THỐNG KÊ CÔNG NỢ KHÁCH HÀNG
            </h2>
            <DebtGrid />
          </div>
        </div>
        <div className="h-[5px] shrink-0" />
      </main>

      <footer className="flex h-[26px] shrink-0 items-center border-t border-[#8ba3c4] bg-gradient-to-b from-[#dce7f4] to-[#b3c5dc] px-1.5 font-bold">
        <span className="mr-3">Chào mừng: Administrator đến với phần mềm MekongSoft</span>
        <Divider />
        <span className="mx-[11px]">Version: 4.8.0</span>
        <Divider />
        <span className="ml-[11px] text-[#ff0000]">Ngày: 14/11/2023 9:59:13 SA</span>
        <div className="ml-auto flex items-center gap-2">
          <Divider />
          <span>@2023 MekongSoft. Thông tin hỗ trợ: 0901 000 508</span>
        </div>
      </footer>

      <PreviewWindow />
    </div>
  );
}
